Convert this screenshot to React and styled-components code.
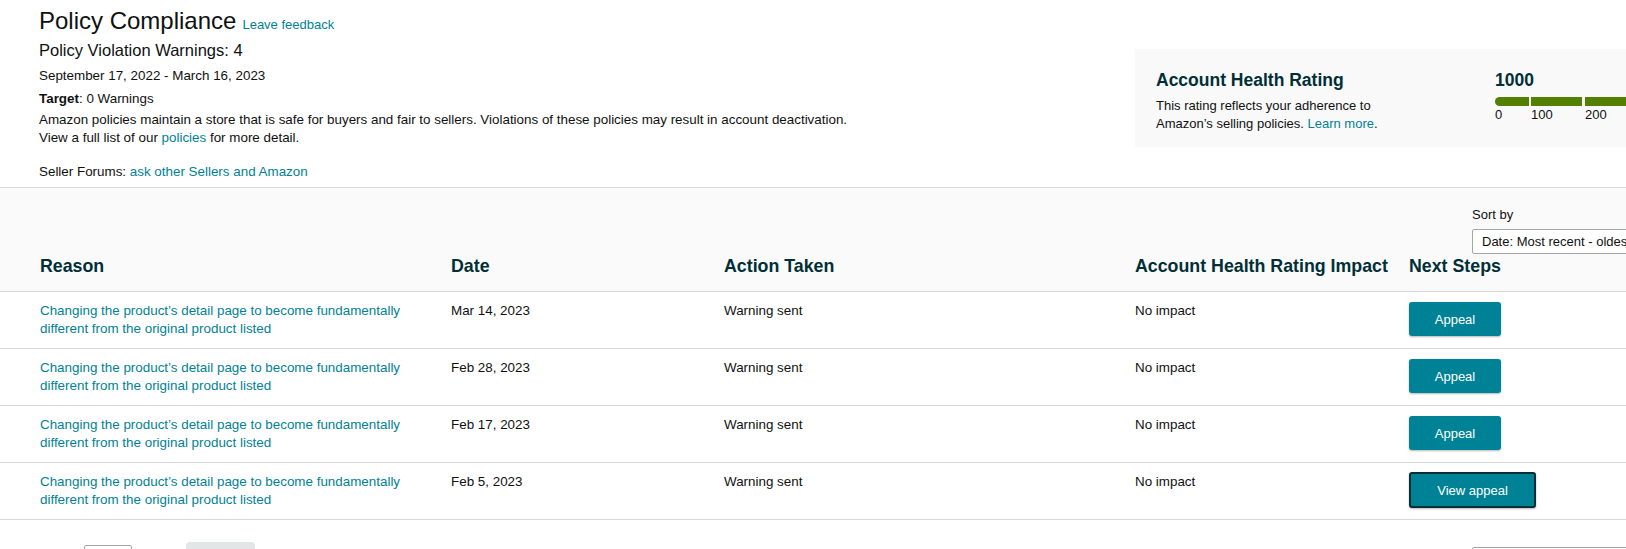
import React from 'react'
import styled, {createGlobalStyle} from 'styled-components'

const GlobalStyle = createGlobalStyle`
    html, body {
        margin: 0;
        padding: 0;
        overflow: hidden;
        background: #fff;
    }
    body {
        font-family: "Liberation Sans", Arial, sans-serif;
        font-size: 13.4px;
        line-height: 18px;
        color: #0f1111;
    }
`

const violations = [
    {date: 'Mar 14, 2023', next: 'Appeal'},
    {date: 'Feb 28, 2023', next: 'Appeal'},
    {date: 'Feb 17, 2023', next: 'Appeal'},
    {date: 'Feb 5, 2023', next: 'View appeal'},
]

const scale = [
    {label: '0', width: 34, gap: 2, first: true},
    {label: '100', width: 51, gap: 3},
    {label: '200', width: 300, gap: 0},
]

const Page = styled.div`
    width: 1760px;
`

const Top = styled.header`
    display: flex;
    align-items: flex-start;
    padding: 6px 0 6px 39px;
`

const Intro = styled.div`
    flex: 0 0 1096px;
`

const TitleRow = styled.div`
    display: flex;
    align-items: baseline;
    gap: 6px;
`

const Title = styled.h1`
    margin: 0;
    font-size: 24px;
    line-height: 30px;
    font-weight: 400;
    color: #0f1111;
`

const Link = styled.a`
    color: #008296;
    text-decoration: none;
    cursor: pointer;
`

const Feedback = styled(Link)`
    font-size: 13px;
`

const Subtitle = styled.h2`
    margin: 3px 0 0;
    font-size: 16.5px;
    line-height: 22px;
    font-weight: 400;
    color: #0f1111;
`

const Text = styled.p`
    margin: ${props => props.$gap || 0}px 0 0;
`

const RatingCard = styled.section`
    flex: 0 0 585px;
    margin-top: 43px;
    display: grid;
    grid-template-columns: 339px 1fr;
    padding: 20px 0 14px 21px;
    background: #f9f9f9;
`

const CardTitle = styled.h3`
    margin: 0;
    font-size: 17.5px;
    line-height: 22px;
    font-weight: 700;
    color: #002f36;
`

const CardText = styled.p`
    margin: 6px 0 0;
    width: 245px;
    font-size: 13px;
`

const Scale = styled.div`
    display: flex;
    margin-top: 6px;
`

const Segment = styled.div`
    display: flex;
    flex-direction: column;
    width: ${props => props.$width}px;
    margin-right: ${props => props.$gap}px;
`

const Bar = styled.div`
    height: 9px;
    background: #538000;
    border-radius: ${props => props.$first ? '5px 0 0 5px' : '0'};
`

const Tick = styled.span`
    margin-top: 1px;
    font-size: 13px;
    line-height: 16px;
`

const TableHead = styled.div`
    background: #fafafa;
    border-top: 1px solid #d5d9d9;
    border-bottom: 1px solid #d5d9d9;
`

const SortBar = styled.div`
    display: flex;
    justify-content: flex-end;
    padding: 18px 40px 0 0;
`

const SortControl = styled.div`
    display: flex;
    flex-direction: column;
    width: 248px;
    font-size: 13px;
`

const Select = styled.div`
    margin-top: 5px;
    height: 23px;
    line-height: 23px;
    padding: 0 9px;
    background: #fff;
    border: 1px solid #a6a6a6;
    border-radius: 2px;
    white-space: nowrap;
    overflow: hidden;
`

const Grid = styled.div`
    display: grid;
    grid-template-columns: 411px 273px 411px 274px 1fr;
    padding-left: 40px;
`

const HeadRow = styled(Grid)`
    margin-top: 1px;
    padding-bottom: 14px;
`

const HeadCell = styled.div`
    font-size: 17.8px;
    line-height: 22px;
    font-weight: 700;
    color: #002f36;
    white-space: nowrap;
`

const Row = styled(Grid)`
    padding-top: 10px;
    padding-bottom: 10px;
    border-bottom: 1px solid #d5d9d9;
`

const Cell = styled.div`
    padding-right: 20px;
`

const Button = styled.button`
    display: block;
    width: ${props => props.$outlined ? 127 : 92}px;
    height: ${props => props.$outlined ? 36 : 34}px;
    margin-top: ${props => props.$outlined ? -1 : 0}px;
    padding: 0;
    font-family: inherit;
    font-size: 13px;
    color: #fff;
    background: #008296;
    border: ${props => props.$outlined ? '2px solid #002f36' : 'none'};
    border-radius: 3px;
    box-shadow: 0 1px 2px rgba(15, 17, 17, 0.3);
    cursor: pointer;
`

const Pagination = styled.div`
    display: flex;
    align-items: center;
    gap: 14px;
    padding: 22px 40px 0 40px;
`

const PageLabel = styled.span`
    width: 30px;
`

const PageInput = styled.div`
    width: 46px;
    height: 28px;
    border: 1px solid #a6a6a6;
    border-radius: 2px;
`

const GoButton = styled.div`
    margin-left: 40px;
    width: 69px;
    height: 36px;
    background: #e3e6e6;
    border-radius: 4px;
`

const PerPage = styled.div`
    align-self: flex-start;
    margin: 5px 0 0 auto;
    width: 246px;
    height: 26px;
    border: 1px solid #a6a6a6;
    border-radius: 2px;
`

export default function App() {
    return (
        <Page>
            <GlobalStyle />
            <Top>
                <Intro>
                    <TitleRow>
                        <Title>Policy Compliance</Title>
                        <Feedback>Leave feedback</Feedback>
                    </TitleRow>
                    <Subtitle>Policy Violation Warnings: 4</Subtitle>
                    <Text $gap={6}>September 17, 2022 - March 16, 2023</Text>
                    <Text $gap={5}><b>Target</b>: 0 Warnings</Text>
                    <Text $gap={3}>
                        Amazon policies maintain a store that is safe for buyers and fair to sellers. Violations of these policies may result in account deactivation.
                        <br />
                        View a full list of our <Link>policies</Link> for more detail.
                    </Text>
                    <Text $gap={16}>Seller Forums: <Link>ask other Sellers and Amazon</Link></Text>
                </Intro>
                <RatingCard>
                    <div>
                        <CardTitle>Account Health Rating</CardTitle>
                        <CardText>
                            This rating reflects your adherence to Amazon’s selling policies. <Link>Learn more</Link>.
                        </CardText>
                    </div>
                    <div>
                        <CardTitle>1000</CardTitle>
                        <Scale>
                            {scale.map(s => (
                                <Segment key={s.label} $width={s.width} $gap={s.gap}>
                                    <Bar $first={s.first} />
                                    <Tick>{s.label}</Tick>
                                </Segment>
                            ))}
                        </Scale>
                    </div>
                </RatingCard>
            </Top>

            <TableHead>
                <SortBar>
                    <SortControl>
                        <span>Sort by</span>
                        <Select>Date: Most recent - oldest</Select>
                    </SortControl>
                </SortBar>
                <HeadRow>
                    <HeadCell>Reason</HeadCell>
                    <HeadCell>Date</HeadCell>
                    <HeadCell>Action Taken</HeadCell>
                    <HeadCell>Account Health Rating Impact</HeadCell>
                    <HeadCell>Next Steps</HeadCell>
                </HeadRow>
            </TableHead>

            {violations.map((v, i) => (
                <Row key={i}>
                    <Cell>
                        <Link>Changing the product’s detail page to become fundamentally different from the original product listed</Link>
                    </Cell>
                    <Cell>{v.date}</Cell>
                    <Cell>Warning sent</Cell>
                    <Cell>No impact</Cell>
                    <Cell>
                        <Button $outlined={v.next === 'View appeal'}>{v.next}</Button>
                    </Cell>
                </Row>
            ))}

            <Pagination>
                <PageLabel />
                <PageInput />
                <GoButton />
                <PerPage />
            </Pagination>
        </Page>
    )
}
